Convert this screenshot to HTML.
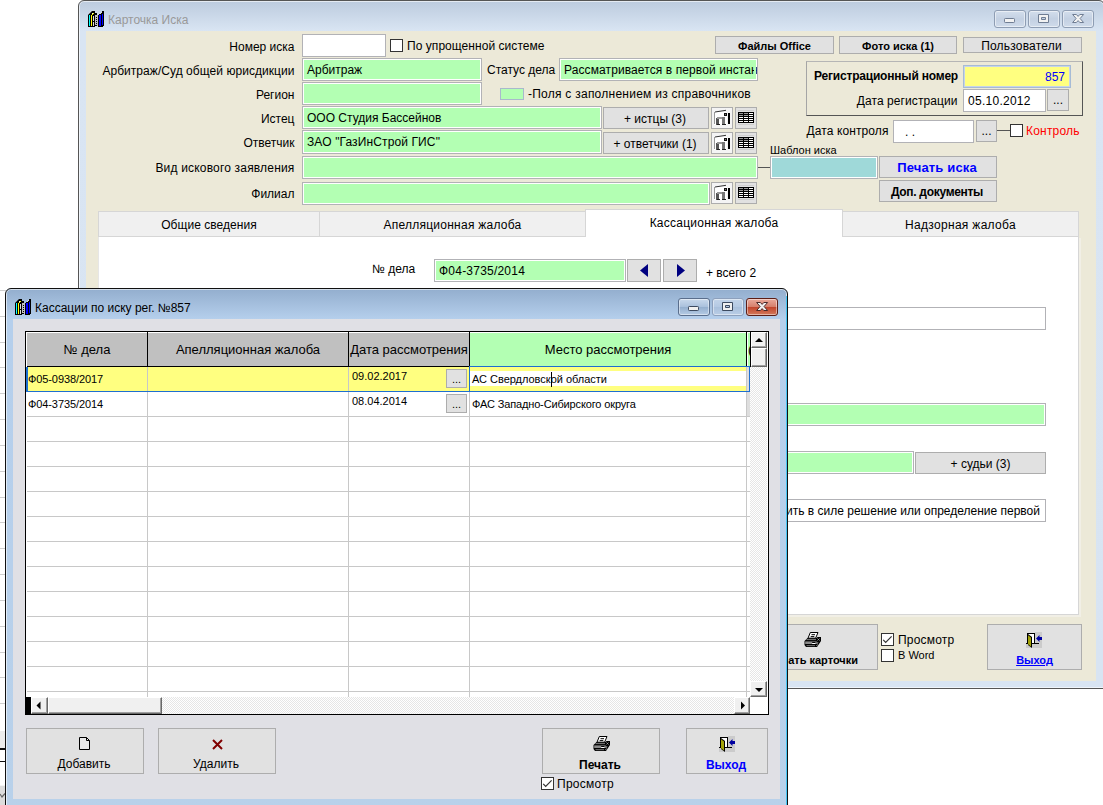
<!DOCTYPE html>
<html><head><meta charset="utf-8"><title>Карточка Иска</title>
<style>
html,body{margin:0;padding:0}
body{width:1103px;height:805px;overflow:hidden;background:#fff;position:relative;font:12px "Liberation Sans",sans-serif;color:#000}
.a{position:absolute;box-sizing:border-box;white-space:nowrap}
.l{position:absolute;white-space:nowrap;text-align:right;line-height:14px;height:14px}
.t{position:absolute;white-space:nowrap;line-height:14px;height:14px}
.f{position:absolute;box-sizing:border-box;border:1px solid #b2b2b6;box-shadow:inset 0 0 0 1px #fff;white-space:nowrap;overflow:hidden;line-height:21px;padding:1px 0 0 4px}
.g{background:#b3ffb3}
.w{background:#fff}
.b{position:absolute;box-sizing:border-box;border:1px solid #adadad;background:#e1e1e1;text-align:center;white-space:nowrap;overflow:hidden}
.cb{position:absolute;box-sizing:border-box;width:13px;height:13px;border:1px solid #333;background:#fff}
.tab{background:#f0f0f0;border:1px solid #d6d6d6;text-align:center;line-height:26px}
.tab.sel{background:#fff;border-bottom:none;line-height:27px}
.cap{border:1px solid #8e9db3;border-radius:3px;background:linear-gradient(#d3deec,#c3d0e2 50%,#cfdbea);box-shadow:inset 0 0 0 1px rgba(255,255,255,.5)}
.hd{font-size:13px;text-align:center;line-height:16px;height:16px}
.c{font-size:11px}
.sb{background:#f0f0f0;border:1px solid;border-color:#fff #696969 #696969 #fff;box-shadow:inset -1px -1px 0 #a0a0a0}
.trk{background:repeating-conic-gradient(#ffffff 0 25%,#e6e6e6 0 50%) 0 0/2px 2px}
.cap2{border:1px solid #5a6e8c;border-radius:3px;background:linear-gradient(#c9d9ec,#a9c0dc 50%,#93aece 50%,#b5cbe4);box-shadow:inset 0 0 0 1px rgba(255,255,255,.45)}
.cap2.dis{border-color:#8da0bc;background:linear-gradient(#c3d4e9,#b4c9e3 50%,#a9c0dc 50%,#b9cde6)}
.cap2.cls{border-color:#5c1e16;background:linear-gradient(#e9a99b,#d6806c 48%,#c1432a 50%,#d37a5c)}
</style></head><body>
<!-- desktop faint lines -->
<div id="desk"><div class="a" style="left:0;top:290px;width:6px;height:1px;background:#cfcfcf"></div><div class="a" style="left:0;top:316px;width:6px;height:1px;background:#cfcfcf"></div><div class="a" style="left:0;top:342px;width:6px;height:1px;background:#cfcfcf"></div><div class="a" style="left:0;top:367px;width:6px;height:1px;background:#cfcfcf"></div><div class="a" style="left:0;top:393px;width:6px;height:1px;background:#cfcfcf"></div><div class="a" style="left:0;top:419px;width:6px;height:1px;background:#cfcfcf"></div><div class="a" style="left:0;top:445px;width:6px;height:1px;background:#cfcfcf"></div><div class="a" style="left:0;top:471px;width:6px;height:1px;background:#cfcfcf"></div><div class="a" style="left:0;top:497px;width:6px;height:1px;background:#cfcfcf"></div><div class="a" style="left:0;top:522px;width:6px;height:1px;background:#cfcfcf"></div><div class="a" style="left:0;top:548px;width:6px;height:1px;background:#cfcfcf"></div><div class="a" style="left:0;top:574px;width:6px;height:1px;background:#cfcfcf"></div><div class="a" style="left:0;top:600px;width:6px;height:1px;background:#cfcfcf"></div><div class="a" style="left:0;top:626px;width:6px;height:1px;background:#cfcfcf"></div><div class="a" style="left:0;top:652px;width:6px;height:1px;background:#cfcfcf"></div><div class="a" style="left:0;top:677px;width:6px;height:1px;background:#cfcfcf"></div><div class="a" style="left:0;top:703px;width:6px;height:1px;background:#cfcfcf"></div><div class="a" style="left:0;top:731px;width:6px;height:17px;background:#ececec"></div><div class="a" style="left:0;top:748px;width:6px;height:2px;background:#111"></div><div class="a" style="left:0;top:761px;width:6px;height:1px;background:#111"></div><div class="a" style="left:0;top:785px;width:6px;height:20px;background:#dcdcdc;border-top:1px solid #f4f4f4"></div><svg class="a" style="left:0;top:792px" width="6" height="8"><path d="M0 2 L2 5 L5 1.5" fill="none" stroke="#666" stroke-width="1.2"/></svg></div>

<!-- ============ BACK WINDOW ============ -->
<div class="a" id="w1" style="left:78px;top:0px;width:1027px;height:689px;border:1px solid #555;border-radius:6px 6px 0 0;box-shadow:inset 0 0 0 1px rgba(255,255,255,.6);background:linear-gradient(#bccbde 0,#d9e5f3 30px,#d8e4f2 100%)"></div>
<div class="a" style="left:86px;top:31px;width:1010px;height:650px;background:#ece9d8"></div>
<svg class="a" style="left:88px;top:11px" width="16" height="16" shape-rendering="crispEdges"><polygon points="0,4 4,0 7,0 7,2 9,2 9,4" fill="#000" shape-rendering="auto"/><rect x="4" y="2" width="1" height="1" fill="#eee"/><rect x="7" y="3" width="1" height="1" fill="#eee"/><rect x="0" y="4" width="7" height="12" fill="#000"/><rect x="1" y="4" width="1" height="11" fill="#0ff"/><rect x="3" y="4" width="1" height="11" fill="#ff0"/><rect x="4" y="3" width="1" height="1" fill="#ff0"/><rect x="5" y="2" width="1" height="1" fill="#ff0"/><rect x="5" y="5" width="1" height="5" fill="#ddd"/><rect x="5" y="11" width="1" height="4" fill="#ddd"/><rect x="7" y="4" width="3" height="11" fill="#c0c0c0"/><rect x="7" y="3" width="2" height="1" fill="#000"/><rect x="8" y="6" width="1" height="1" fill="#000"/><rect x="8" y="8" width="1" height="1" fill="#000"/><rect x="8" y="10" width="1" height="1" fill="#000"/><rect x="8" y="12" width="1" height="1" fill="#000"/><rect x="7" y="14" width="2" height="1" fill="#000"/><polygon points="10,4 14,0 16,0 16,14 14,16 10,16" fill="#000"/><rect x="11" y="4" width="2" height="11" fill="#00f"/><rect x="14" y="3" width="1" height="11" fill="#00f"/><rect x="13" y="1" width="1" height="1" fill="#ddd"/><rect x="12" y="2" width="1" height="1" fill="#ddd"/></svg>
<div class="t" style="left:108px;top:13px;color:#999;font-size:12px">Карточка Иска</div>


<!-- caption buttons back -->
<div class="a cap" style="left:994px;top:10px;width:32px;height:18px"><svg width="30" height="16" style="display:block"><rect x="9.5" y="7.5" width="10" height="4" rx="0.8" fill="#f2f2f2" stroke="#6f7d93"/></svg></div>
<div class="a cap" style="left:1028px;top:10px;width:32px;height:18px"><svg width="30" height="16" style="display:block"><path fill-rule="evenodd" d="M9.5 3.5 h10 v8 h-10 Z M12.5 6.5 h4 v2 h-4 Z" fill="#f2f2f2" stroke="#6f7d93"/></svg></div>
<div class="a cap" style="left:1062px;top:10px;width:32px;height:18px"><svg width="30" height="16" style="display:block"><path d="M9.6 3.5 h3.8 l1.7 1.9 l1.7 -1.9 h3.8 l-3.5 4 l3.5 4 h-3.8 l-1.7 -1.9 l-1.7 1.9 h-3.8 l3.5 -4 Z" fill="#f2f2f2" stroke="#6f7d93" stroke-linejoin="round"/></svg></div>

<!-- labels -->
<div class="l" style="left:96px;width:198.5px;top:40px">Номер иска</div>
<div class="l" style="left:96px;width:198.5px;top:64px;letter-spacing:.05px">Арбитраж/Суд общей юрисдикции</div>
<div class="l" style="left:96px;width:198.5px;top:88px">Регион</div>
<div class="l" style="left:96px;width:198.5px;top:112px">Истец</div>
<div class="l" style="left:96px;width:198.5px;top:136px">Ответчик</div>
<div class="l" style="left:96px;width:198.5px;top:161px;letter-spacing:.18px">Вид искового заявления</div>
<div class="l" style="left:96px;width:198.5px;top:187px">Филиал</div>

<div class="f w" style="left:302px;top:34px;width:84px;height:23px"></div>
<div class="cb" style="left:390px;top:39px"></div>
<div class="t" style="left:407px;top:39px;letter-spacing:.05px">По упрощенной системе</div>

<div class="f g" style="left:302px;top:58px;width:180px;height:23px">Арбитраж</div>
<div class="t" style="left:487px;top:63px">Статус дела</div>
<div class="f g" style="left:559px;top:58px;width:199px;height:23px;letter-spacing:.1px">Рассматривается в первой инстанции</div>

<div class="a" style="left:754px;top:60px;width:2px;height:19px;background:#b3ffb3"></div>
<div class="f g" style="left:302px;top:82px;width:180px;height:23px"></div>
<div class="a" style="left:500px;top:88px;width:24px;height:12px;background:#b3ffb3;border:1px solid #a9b9cc"></div>
<div class="t" style="left:528px;top:87px;letter-spacing:0.25px">-Поля с заполнением из справочников</div>

<div class="f g" style="left:302px;top:106px;width:300px;height:23px">ООО Студия Бассейнов</div>
<div class="b" style="left:603px;top:107px;width:106px;height:22px;line-height:23px;text-indent:-2px">+ истцы (3)</div>
<div class="b ic1" style="left:711px;top:107px;width:22px;height:22px"><svg width="20" height="20" style="display:block" shape-rendering="crispEdges"><rect x="0" y="0" width="20" height="20" fill="#f4f4f4"/><rect x="2" y="4" width="13" height="13" fill="#fff"/><rect x="2" y="4" width="1" height="12" fill="#999"/><path d="M3 4 L14 2.3" stroke="#333" stroke-width="1" shape-rendering="auto"/><rect x="12" y="5" width="3" height="3" fill="#111"/><rect x="13" y="6" width="1" height="1" fill="#777"/><rect x="16" y="5" width="2" height="11" fill="#000"/><rect x="4" y="10" width="3" height="7" fill="#555"/><rect x="5" y="9" width="8" height="2" fill="#999"/><rect x="10" y="9" width="3" height="8" fill="#777"/><rect x="5" y="16" width="3" height="1" fill="#222"/><rect x="10" y="16" width="4" height="1" fill="#222"/></svg></div>
<div class="b ic2" style="left:735px;top:107px;width:22px;height:22px"><svg width="20" height="20" style="display:block" shape-rendering="crispEdges"><rect x="2" y="2" width="16" height="1" fill="#cfcfcf"/><rect x="2" y="16" width="16" height="1" fill="#cfcfcf"/><rect x="2" y="4" width="16" height="11" fill="#000"/><rect x="3" y="5" width="4" height="1" fill="#999"/><rect x="8" y="5" width="4" height="1" fill="#999"/><rect x="13" y="5" width="4" height="1" fill="#fff"/><rect x="3" y="7" width="4" height="1" fill="#999"/><rect x="8" y="7" width="4" height="1" fill="#999"/><rect x="13" y="7" width="4" height="1" fill="#fff"/><rect x="3" y="9" width="4" height="1" fill="#fff"/><rect x="8" y="9" width="4" height="1" fill="#fff"/><rect x="13" y="9" width="4" height="1" fill="#fff"/><rect x="3" y="11" width="4" height="1" fill="#fff"/><rect x="8" y="11" width="4" height="1" fill="#fff"/><rect x="13" y="11" width="4" height="1" fill="#fff"/><rect x="3" y="13" width="4" height="1" fill="#fff"/><rect x="8" y="13" width="4" height="1" fill="#fff"/><rect x="13" y="13" width="4" height="1" fill="#fff"/></svg></div>

<div class="f g" style="left:302px;top:130px;width:300px;height:24px;line-height:21px;letter-spacing:.12px">ЗАО "ГазИнСтрой ГИС"</div>
<div class="b" style="left:603px;top:132px;width:106px;height:22px;line-height:23px;text-indent:-2px">+ ответчики (1)</div>
<div class="b ic1" style="left:711px;top:132px;width:22px;height:22px"><svg width="20" height="20" style="display:block" shape-rendering="crispEdges"><rect x="0" y="0" width="20" height="20" fill="#f4f4f4"/><rect x="2" y="4" width="13" height="13" fill="#fff"/><rect x="2" y="4" width="1" height="12" fill="#999"/><path d="M3 4 L14 2.3" stroke="#333" stroke-width="1" shape-rendering="auto"/><rect x="12" y="5" width="3" height="3" fill="#111"/><rect x="13" y="6" width="1" height="1" fill="#777"/><rect x="16" y="5" width="2" height="11" fill="#000"/><rect x="4" y="10" width="3" height="7" fill="#555"/><rect x="5" y="9" width="8" height="2" fill="#999"/><rect x="10" y="9" width="3" height="8" fill="#777"/><rect x="5" y="16" width="3" height="1" fill="#222"/><rect x="10" y="16" width="4" height="1" fill="#222"/></svg></div>
<div class="b ic2" style="left:735px;top:132px;width:22px;height:22px"><svg width="20" height="20" style="display:block" shape-rendering="crispEdges"><rect x="2" y="2" width="16" height="1" fill="#cfcfcf"/><rect x="2" y="16" width="16" height="1" fill="#cfcfcf"/><rect x="2" y="4" width="16" height="11" fill="#000"/><rect x="3" y="5" width="4" height="1" fill="#999"/><rect x="8" y="5" width="4" height="1" fill="#999"/><rect x="13" y="5" width="4" height="1" fill="#fff"/><rect x="3" y="7" width="4" height="1" fill="#999"/><rect x="8" y="7" width="4" height="1" fill="#999"/><rect x="13" y="7" width="4" height="1" fill="#fff"/><rect x="3" y="9" width="4" height="1" fill="#fff"/><rect x="8" y="9" width="4" height="1" fill="#fff"/><rect x="13" y="9" width="4" height="1" fill="#fff"/><rect x="3" y="11" width="4" height="1" fill="#fff"/><rect x="8" y="11" width="4" height="1" fill="#fff"/><rect x="13" y="11" width="4" height="1" fill="#fff"/><rect x="3" y="13" width="4" height="1" fill="#fff"/><rect x="8" y="13" width="4" height="1" fill="#fff"/><rect x="13" y="13" width="4" height="1" fill="#fff"/></svg></div>

<div class="f g" style="left:302px;top:156px;width:456px;height:23px"></div>
<div class="a" style="left:758px;top:167px;width:12px;height:1px;background:#555"></div>
<div class="t" style="left:770px;top:143px;font-size:11px">Шаблон иска</div>
<div class="f" style="left:770px;top:156px;width:108px;height:23px;background:#9fd9d9"></div>
<div class="b" style="left:879px;top:156px;width:118px;height:22px;line-height:22px;font-weight:bold;font-size:13px;letter-spacing:.15px;text-indent:-2px;color:#0000ff">Печать иска</div>
<div class="b" style="left:879px;top:180px;width:118px;height:22px;line-height:22px;font-weight:bold;letter-spacing:-.3px;text-indent:-2px">Доп. документы</div>

<div class="f g" style="left:302px;top:182px;width:408px;height:23px"></div>
<div class="b ic1" style="left:711px;top:182px;width:22px;height:22px"><svg width="20" height="20" style="display:block" shape-rendering="crispEdges"><rect x="0" y="0" width="20" height="20" fill="#f4f4f4"/><rect x="2" y="4" width="13" height="13" fill="#fff"/><rect x="2" y="4" width="1" height="12" fill="#999"/><path d="M3 4 L14 2.3" stroke="#333" stroke-width="1" shape-rendering="auto"/><rect x="12" y="5" width="3" height="3" fill="#111"/><rect x="13" y="6" width="1" height="1" fill="#777"/><rect x="16" y="5" width="2" height="11" fill="#000"/><rect x="4" y="10" width="3" height="7" fill="#555"/><rect x="5" y="9" width="8" height="2" fill="#999"/><rect x="10" y="9" width="3" height="8" fill="#777"/><rect x="5" y="16" width="3" height="1" fill="#222"/><rect x="10" y="16" width="4" height="1" fill="#222"/></svg></div>
<div class="b ic2" style="left:735px;top:182px;width:22px;height:22px"><svg width="20" height="20" style="display:block" shape-rendering="crispEdges"><rect x="2" y="2" width="16" height="1" fill="#cfcfcf"/><rect x="2" y="16" width="16" height="1" fill="#cfcfcf"/><rect x="2" y="4" width="16" height="11" fill="#000"/><rect x="3" y="5" width="4" height="1" fill="#999"/><rect x="8" y="5" width="4" height="1" fill="#999"/><rect x="13" y="5" width="4" height="1" fill="#fff"/><rect x="3" y="7" width="4" height="1" fill="#999"/><rect x="8" y="7" width="4" height="1" fill="#999"/><rect x="13" y="7" width="4" height="1" fill="#fff"/><rect x="3" y="9" width="4" height="1" fill="#fff"/><rect x="8" y="9" width="4" height="1" fill="#fff"/><rect x="13" y="9" width="4" height="1" fill="#fff"/><rect x="3" y="11" width="4" height="1" fill="#fff"/><rect x="8" y="11" width="4" height="1" fill="#fff"/><rect x="13" y="11" width="4" height="1" fill="#fff"/><rect x="3" y="13" width="4" height="1" fill="#fff"/><rect x="8" y="13" width="4" height="1" fill="#fff"/><rect x="13" y="13" width="4" height="1" fill="#fff"/></svg></div>

<!-- top right buttons -->
<div class="b" style="left:715px;top:36px;width:119px;height:18px;line-height:16px;padding-top:1px;font-weight:bold;font-size:11px">Файлы Office</div>
<div class="b" style="left:839px;top:36px;width:118px;height:18px;line-height:16px;padding-top:1px;font-weight:bold;font-size:11px">Фото иска (1)</div>
<div class="b" style="left:963px;top:37px;width:119px;height:16px;line-height:16px;letter-spacing:.2px;text-indent:-2px">Пользователи</div>

<!-- group box -->
<div class="a" style="left:806px;top:61px;width:277px;height:55px;border:1px solid;border-color:#b5b5b5 #555 #555 #a5a5a5"></div>
<div class="l" style="left:806px;width:152px;top:69px;font-weight:bold;letter-spacing:-0.2px">Регистрационный номер</div>
<div class="f" style="left:963px;top:65px;width:108px;height:23px;background:#ffff80;border-color:#a6bbd6;box-shadow:inset 0 0 0 1px #c6d4e8;color:#0000ff;text-align:right;padding-right:5px">857</div>
<div class="l" style="left:806px;width:151.5px;top:94px;letter-spacing:.08px">Дата регистрации</div>
<div class="f w" style="left:963px;top:89px;width:83px;height:23px;letter-spacing:.27px">05.10.2012</div>
<div class="b" style="left:1047px;top:89px;width:22px;height:22px;line-height:20px">...</div>

<div class="l" style="left:780px;width:108.5px;top:124px;letter-spacing:.1px">Дата контроля</div>
<div class="f w" style="left:893px;top:120px;width:81px;height:23px;padding-left:11px">. .</div>
<div class="b" style="left:976px;top:120px;width:21px;height:22px;line-height:20px">...</div>
<div class="a" style="left:997px;top:130px;width:13px;height:1px;background:#555"></div>
<div class="cb" style="left:1010px;top:124px"></div>
<div class="t" style="left:1026px;top:124px;color:#ff0000;letter-spacing:.2px">Контроль</div>

<!-- tabs -->
<div class="a" style="left:98px;top:236px;width:981px;height:379px;background:#fff;border:1px solid #d6d6d6;border-top:none;border-left-color:#e6e6e6;box-shadow:2px 2px 0 #f1efe6"></div>
<div class="a tab" style="left:98px;top:211px;width:222px;height:26px;letter-spacing:.05px">Общие сведения</div>
<div class="a tab" style="left:319px;top:211px;width:267px;height:26px;letter-spacing:.25px">Апелляционная жалоба</div>
<div class="a tab" style="left:842px;top:211px;width:237px;height:26px;letter-spacing:.3px">Надзорная жалоба</div>
<div class="a tab sel" style="left:585px;top:209px;width:258px;height:28px;letter-spacing:.24px">Кассационная жалоба</div>

<div class="t" style="left:372px;top:262px">№ дела</div>
<div class="f g" style="left:434px;top:259px;width:192px;height:23px;letter-spacing:.22px">Ф04-3735/2014</div>
<div class="b" style="left:627px;top:259px;width:34px;height:23px"><svg width="32" height="21" style="display:block"><path d="M20 4 L12 10.5 L20 17 Z" fill="#000080"/></svg></div>
<div class="b" style="left:663px;top:259px;width:34px;height:23px"><svg width="32" height="21" style="display:block"><path d="M13 4 L21 10.5 L13 17 Z" fill="#000080"/></svg></div>
<div class="t" style="left:706px;top:266px">+ всего 2</div>

<div class="f w" style="left:600px;top:307px;width:446px;height:23px"></div>
<div class="f g" style="left:600px;top:403px;width:446px;height:23px"></div>
<div class="f g" style="left:600px;top:451px;width:314px;height:23px"></div>
<div class="b" style="left:915px;top:452px;width:131px;height:22px;line-height:23px">+ судьи (3)</div>
<div class="f w" style="left:600px;top:499px;width:446px;height:23px;text-align:right;padding-right:5px">Оставить в силе решение или определение первой</div>

<!-- bottom buttons back window -->
<div class="b" style="left:748px;top:624px;width:130px;height:46px"><div class="t" style="left:0;width:128px;text-align:center;top:28px;font-weight:bold;font-size:11px">Печать карточки</div></div>
<svg class="a" style="left:804px;top:632px" width="18" height="16"><path d="M0.5 9 L3.5 6 L12.5 6 L13.5 5 L17 5 L17 9 L13 15 L2 15 L0.5 13 Z" fill="#000"/><path d="M6.3 0.5 L14 0.5 L11.6 6.2 L4 6.2 Z" fill="#fff" stroke="#000" stroke-width="1"/><path d="M7.5 2.7 H11 M6.7 4.6 H10.3" stroke="#000" stroke-width="1"/><rect x="1.2" y="9.4" width="11.6" height="2.6" fill="#8a8a8a"/><rect x="8.2" y="11" width="3.2" height="1" fill="#fff"/><rect x="8.2" y="10" width="3.2" height="1" fill="#000"/><path d="M2.5 7.6 H12 M2.5 13.7 H11" stroke="#9a9a9a" stroke-width="0.8"/><path d="M13.5 6.5 L15.5 8.5 M15.5 6.5 L13.5 8.5 M14 10 L13 12 M13.5 12.5 L12.5 14" stroke="#aaa" stroke-width="0.8"/></svg>
<div class="cb" style="left:881px;top:633px"><svg width="11" height="11" style="display:block"><path d="M1.2 5.8 L3.7 8.4 L9.6 2.4" fill="none" stroke="#333" stroke-width="1.2"/></svg></div>
<div class="t" style="left:898px;top:633px;letter-spacing:.2px">Просмотр</div>
<div class="cb" style="left:881px;top:649px"></div>
<div class="t" style="left:898px;top:648px;font-size:11px">В Word</div>
<div class="b" style="left:987px;top:624px;width:95px;height:46px"><div class="t" style="left:0;width:93px;top:28px;font-weight:bold;font-size:11px;color:#0000ff;text-decoration:underline;text-align:center">Выход</div></div>
<svg class="a" style="left:1026px;top:632px" width="16" height="16" shape-rendering="crispEdges"><rect x="9" y="0" width="7" height="16" fill="#cbcbcb"/><rect x="0" y="12" width="16" height="4" fill="#cbcbcb"/><rect x="1" y="1" width="8" height="11" fill="#000"/><rect x="2" y="2" width="6" height="9" fill="#fff"/><rect x="0" y="11" width="13" height="1" fill="#000"/><polygon points="2,2 6,5 6,16 2,13" fill="#000" shape-rendering="auto"/><polygon points="2,3.2 5,5.6 5,14.5 2,12.2" fill="#a2a208" shape-rendering="auto"/><polygon points="10,6.5 13.5,3 13.5,5 16,5 16,8 13.5,8 13.5,10" fill="#0000a0" shape-rendering="auto"/></svg>

<!-- ============ DIALOG ============ -->
<div class="a" id="w2" style="left:5px;top:288px;width:783px;height:530px;border:1px solid #111;border-radius:6px 6px 0 0;box-shadow:inset 0 0 0 1px rgba(255,255,255,.6);background:linear-gradient(#93aece 0,#b5cfec 30px,#b9d1ea 100%)"></div>
<div class="a" style="left:13px;top:319px;width:767px;height:480px;background:#e0e0e5"></div>
<svg class="a" style="left:15px;top:299px" width="16" height="16" shape-rendering="crispEdges"><polygon points="0,4 4,0 7,0 7,2 9,2 9,4" fill="#000" shape-rendering="auto"/><rect x="4" y="2" width="1" height="1" fill="#eee"/><rect x="7" y="3" width="1" height="1" fill="#eee"/><rect x="0" y="4" width="7" height="12" fill="#000"/><rect x="1" y="4" width="1" height="11" fill="#0ff"/><rect x="3" y="4" width="1" height="11" fill="#ff0"/><rect x="4" y="3" width="1" height="1" fill="#ff0"/><rect x="5" y="2" width="1" height="1" fill="#ff0"/><rect x="5" y="5" width="1" height="5" fill="#ddd"/><rect x="5" y="11" width="1" height="4" fill="#ddd"/><rect x="7" y="4" width="3" height="11" fill="#c0c0c0"/><rect x="7" y="3" width="2" height="1" fill="#000"/><rect x="8" y="6" width="1" height="1" fill="#000"/><rect x="8" y="8" width="1" height="1" fill="#000"/><rect x="8" y="10" width="1" height="1" fill="#000"/><rect x="8" y="12" width="1" height="1" fill="#000"/><rect x="7" y="14" width="2" height="1" fill="#000"/><polygon points="10,4 14,0 16,0 16,14 14,16 10,16" fill="#000"/><rect x="11" y="4" width="2" height="11" fill="#00f"/><rect x="14" y="3" width="1" height="11" fill="#00f"/><rect x="13" y="1" width="1" height="1" fill="#ddd"/><rect x="12" y="2" width="1" height="1" fill="#ddd"/></svg>
<div class="a" style="left:786px;top:296px;width:1px;height:509px;background:#45c6f5"></div>
<div class="t" style="left:35px;top:301px;font-size:12px">Кассации по иску рег. №857</div>

<!-- caption buttons dialog -->
<div class="a cap2" style="left:678px;top:298px;width:32px;height:18px"><svg width="30" height="16" style="display:block"><rect x="9.5" y="7.5" width="10" height="4" rx="0.8" fill="#f0f0f0" stroke="#3c4a60"/></svg></div>
<div class="a cap2 dis" style="left:712px;top:298px;width:32px;height:18px"><svg width="30" height="16" style="display:block"><path fill-rule="evenodd" d="M9.5 3.5 h10 v8 h-10 Z M12.5 6.5 h4 v2 h-4 Z" fill="#f0f0f0" stroke="#3c4a60"/></svg></div>
<div class="a cap2 cls" style="left:746px;top:298px;width:32px;height:18px"><svg width="30" height="16" style="display:block"><path d="M9.6 3.5 h3.8 l1.7 1.9 l1.7 -1.9 h3.8 l-3.5 4 l3.5 4 h-3.8 l-1.7 -1.9 l-1.7 1.9 h-3.8 l3.5 -4 Z" fill="#f0f0f0" stroke="#4a2a2a" stroke-linejoin="round"/></svg></div>

<!-- grid -->
<div class="a" style="left:25px;top:331px;width:744px;height:384px;background:#fff;border:1px solid #000"></div>
<!-- header -->
<div class="a" style="left:27px;top:333px;width:442px;height:33px;background:#c0c0c0"></div>
<div class="a" style="left:470px;top:333px;width:280px;height:33px;background:#b3ffb3"></div>
<div class="a" style="left:27px;top:366px;width:723px;height:1px;background:#000"></div>
<div class="a" style="left:147px;top:332px;width:1px;height:34px;background:#000"></div>
<div class="a" style="left:348px;top:332px;width:1px;height:34px;background:#000"></div>
<div class="a" style="left:469px;top:332px;width:1px;height:34px;background:#000"></div>
<div class="a" style="left:746px;top:332px;width:1px;height:34px;background:#000"></div>
<div class="a" style="left:747px;top:333px;width:1px;height:33px;background:#fff"></div>
<div class="a" style="left:750px;top:332px;width:1px;height:35px;background:#000"></div>
<div class="t hd" style="left:748px;width:2px;top:342px;overflow:hidden;text-align:left">(</div>
<div class="t hd" style="left:27px;width:120px;top:342px">№ дела</div>
<div class="t hd" style="left:148px;width:200px;top:342px">Апелляционная жалоба</div>
<div class="t hd" style="left:349px;width:120px;top:342px">Дата рассмотрения</div>
<div class="t hd" style="left:470px;width:276px;top:342px">Место рассмотрения</div>
<!-- body -->
<div class="a" style="left:27px;top:367px;width:442px;height:24px;background:#ffff80"></div>
<div class="a" style="left:470px;top:367px;width:276px;height:24px;background:#ffff80"></div>
<div class="a" style="left:470px;top:371px;width:276px;height:15px;background:#fff"></div>
<div class="a" style="left:27px;top:416px;width:723px;height:1px;background:#c8c8c8"></div>
<div class="a" style="left:27px;top:441px;width:723px;height:1px;background:#c8c8c8"></div>
<div class="a" style="left:27px;top:466px;width:723px;height:1px;background:#c8c8c8"></div>
<div class="a" style="left:27px;top:491px;width:723px;height:1px;background:#c8c8c8"></div>
<div class="a" style="left:27px;top:516px;width:723px;height:1px;background:#c8c8c8"></div>
<div class="a" style="left:27px;top:541px;width:723px;height:1px;background:#c8c8c8"></div>
<div class="a" style="left:27px;top:566px;width:723px;height:1px;background:#c8c8c8"></div>
<div class="a" style="left:27px;top:591px;width:723px;height:1px;background:#c8c8c8"></div>
<div class="a" style="left:27px;top:616px;width:723px;height:1px;background:#c8c8c8"></div>
<div class="a" style="left:27px;top:641px;width:723px;height:1px;background:#c8c8c8"></div>
<div class="a" style="left:27px;top:666px;width:723px;height:1px;background:#c8c8c8"></div>
<div class="a" style="left:27px;top:691px;width:723px;height:1px;background:#c8c8c8"></div>

<div class="a" style="left:147px;top:367px;width:1px;height:330px;background:#c8c8c8"></div>
<div class="a" style="left:348px;top:367px;width:1px;height:330px;background:#c8c8c8"></div>
<div class="a" style="left:469px;top:367px;width:1px;height:330px;background:#c8c8c8"></div>
<div class="a" style="left:746px;top:367px;width:1px;height:330px;background:#c8c8c8"></div>
<!-- selection borders -->
<div class="a" style="left:747px;top:367px;width:3px;height:49px;background:#dedede"></div>
<div class="a" style="left:27px;top:391px;width:723px;height:1px;background:#1e6fd0"></div>
<div class="a" style="left:26px;top:367px;width:2px;height:25px;background:#1e6fd0"></div>
<div class="a" style="left:469px;top:366px;width:281px;height:26px;border:1px solid #1e6fd0"></div>
<div class="t c" style="left:28px;top:372px;letter-spacing:-.1px">Ф05-0938/2017</div>
<div class="t c" style="left:28px;top:397px;letter-spacing:-.1px">Ф04-3735/2014</div>
<div class="t c" style="left:352px;top:369px">09.02.2017</div>
<div class="t c" style="left:352px;top:394px">08.04.2014</div>
<div class="b" style="left:446px;top:369px;width:21px;height:19px;line-height:18px;font-size:11px;border-color:#adadad">...</div>
<div class="b" style="left:446px;top:394px;width:21px;height:19px;line-height:18px;font-size:11px;border-color:#adadad">...</div>
<div class="t c" style="left:472px;top:372px;letter-spacing:-.02px">АС Свердловской области</div>
<div class="a" style="left:551px;top:372px;width:1px;height:15px;background:#000"></div>
<div class="t c" style="left:472px;top:397px;letter-spacing:-.14px">ФАС Западно-Сибирского округа</div>

<!-- vertical scrollbar -->
<div class="a trk" style="left:750px;top:367px;width:17px;height:330px"></div>
<div class="a sb" style="left:751px;top:332px;width:16px;height:16px"><svg width="16" height="16" style="display:block;margin:-1px"><path d="M4 10 L12 10 L8 6 Z" fill="#000"/></svg></div>
<div class="a sb" style="left:751px;top:348px;width:16px;height:19px"></div>
<div class="a sb" style="left:750px;top:681px;width:17px;height:16px"><svg width="17" height="16" style="display:block;margin:-1px"><path d="M5 7 L13 7 L9 11 Z" fill="#000"/></svg></div>
<!-- horizontal scrollbar -->
<div class="a trk" style="left:27px;top:697px;width:723px;height:17px"></div>
<div class="a" style="left:26px;top:697px;width:5px;height:17px;background:#000"></div>
<div class="a sb" style="left:31px;top:697px;width:17px;height:17px"><svg width="17" height="17" style="display:block;margin:-1px"><path d="M9.5 4.5 L9.5 12.5 L5.5 8.5 Z" fill="#000"/></svg></div>
<div class="a sb" style="left:48px;top:697px;width:114px;height:17px"></div>
<div class="a sb" style="left:734px;top:697px;width:16px;height:17px"><svg width="16" height="17" style="display:block;margin:-1px"><path d="M7 4.5 L7 12.5 L11 8.5 Z" fill="#000"/></svg></div>
<div class="a" style="left:750px;top:697px;width:18px;height:17px;background:#fff"></div>

<!-- dialog buttons -->
<div class="b" style="left:26px;top:728px;width:118px;height:46px"><div class="t" style="left:-1px;width:116px;top:28px;text-align:center;">Добавить</div></div>
<div class="b" style="left:158px;top:728px;width:118px;height:46px"><div class="t" style="left:-1px;width:116px;top:28px;text-align:center;">Удалить</div></div>
<div class="b" style="left:542px;top:728px;width:118px;height:46px"><div class="t" style="left:-1px;width:116px;top:29px;text-align:center;font-weight:bold">Печать</div></div>
<div class="b" style="left:686px;top:728px;width:82px;height:46px"><div class="t" style="left:-1px;width:80px;top:29px;text-align:center;font-weight:bold;color:#0000ff">Выход</div></div>
<svg class="a" style="left:79px;top:737px" width="11" height="13"><path d="M0.5 0.5 H7.5 L10.5 3.5 V12.5 H0.5 Z" fill="#e9e9e9" stroke="#000" stroke-width="1"/><path d="M7.5 0.5 V3.5 H10.5" fill="none" stroke="#000" stroke-width="1"/></svg><svg class="a" style="left:212px;top:739px" width="11" height="11"><path d="M1 1 L10 10 M10 1 L1 10" stroke="#800000" stroke-width="2"/></svg><svg class="a" style="left:593px;top:736px" width="18" height="16"><path d="M0.5 9 L3.5 6 L12.5 6 L13.5 5 L17 5 L17 9 L13 15 L2 15 L0.5 13 Z" fill="#000"/><path d="M6.3 0.5 L14 0.5 L11.6 6.2 L4 6.2 Z" fill="#fff" stroke="#000" stroke-width="1"/><path d="M7.5 2.7 H11 M6.7 4.6 H10.3" stroke="#000" stroke-width="1"/><rect x="1.2" y="9.4" width="11.6" height="2.6" fill="#8a8a8a"/><rect x="8.2" y="11" width="3.2" height="1" fill="#fff"/><rect x="8.2" y="10" width="3.2" height="1" fill="#000"/><path d="M2.5 7.6 H12 M2.5 13.7 H11" stroke="#9a9a9a" stroke-width="0.8"/><path d="M13.5 6.5 L15.5 8.5 M15.5 6.5 L13.5 8.5 M14 10 L13 12 M13.5 12.5 L12.5 14" stroke="#aaa" stroke-width="0.8"/></svg><svg class="a" style="left:719px;top:736px" width="16" height="16" shape-rendering="crispEdges"><rect x="9" y="0" width="7" height="16" fill="#cbcbcb"/><rect x="0" y="12" width="16" height="4" fill="#cbcbcb"/><rect x="1" y="1" width="8" height="11" fill="#000"/><rect x="2" y="2" width="6" height="9" fill="#fff"/><rect x="0" y="11" width="13" height="1" fill="#000"/><polygon points="2,2 6,5 6,16 2,13" fill="#000" shape-rendering="auto"/><polygon points="2,3.2 5,5.6 5,14.5 2,12.2" fill="#a2a208" shape-rendering="auto"/><polygon points="10,6.5 13.5,3 13.5,5 16,5 16,8 13.5,8 13.5,10" fill="#0000a0" shape-rendering="auto"/></svg>
<div class="cb" style="left:541px;top:777px"><svg width="11" height="11" style="display:block"><path d="M1.2 5.8 L3.7 8.4 L9.6 2.4" fill="none" stroke="#333" stroke-width="1.2"/></svg></div>
<div class="t" style="left:557px;top:777px;letter-spacing:.25px">Просмотр</div>

</body></html>
